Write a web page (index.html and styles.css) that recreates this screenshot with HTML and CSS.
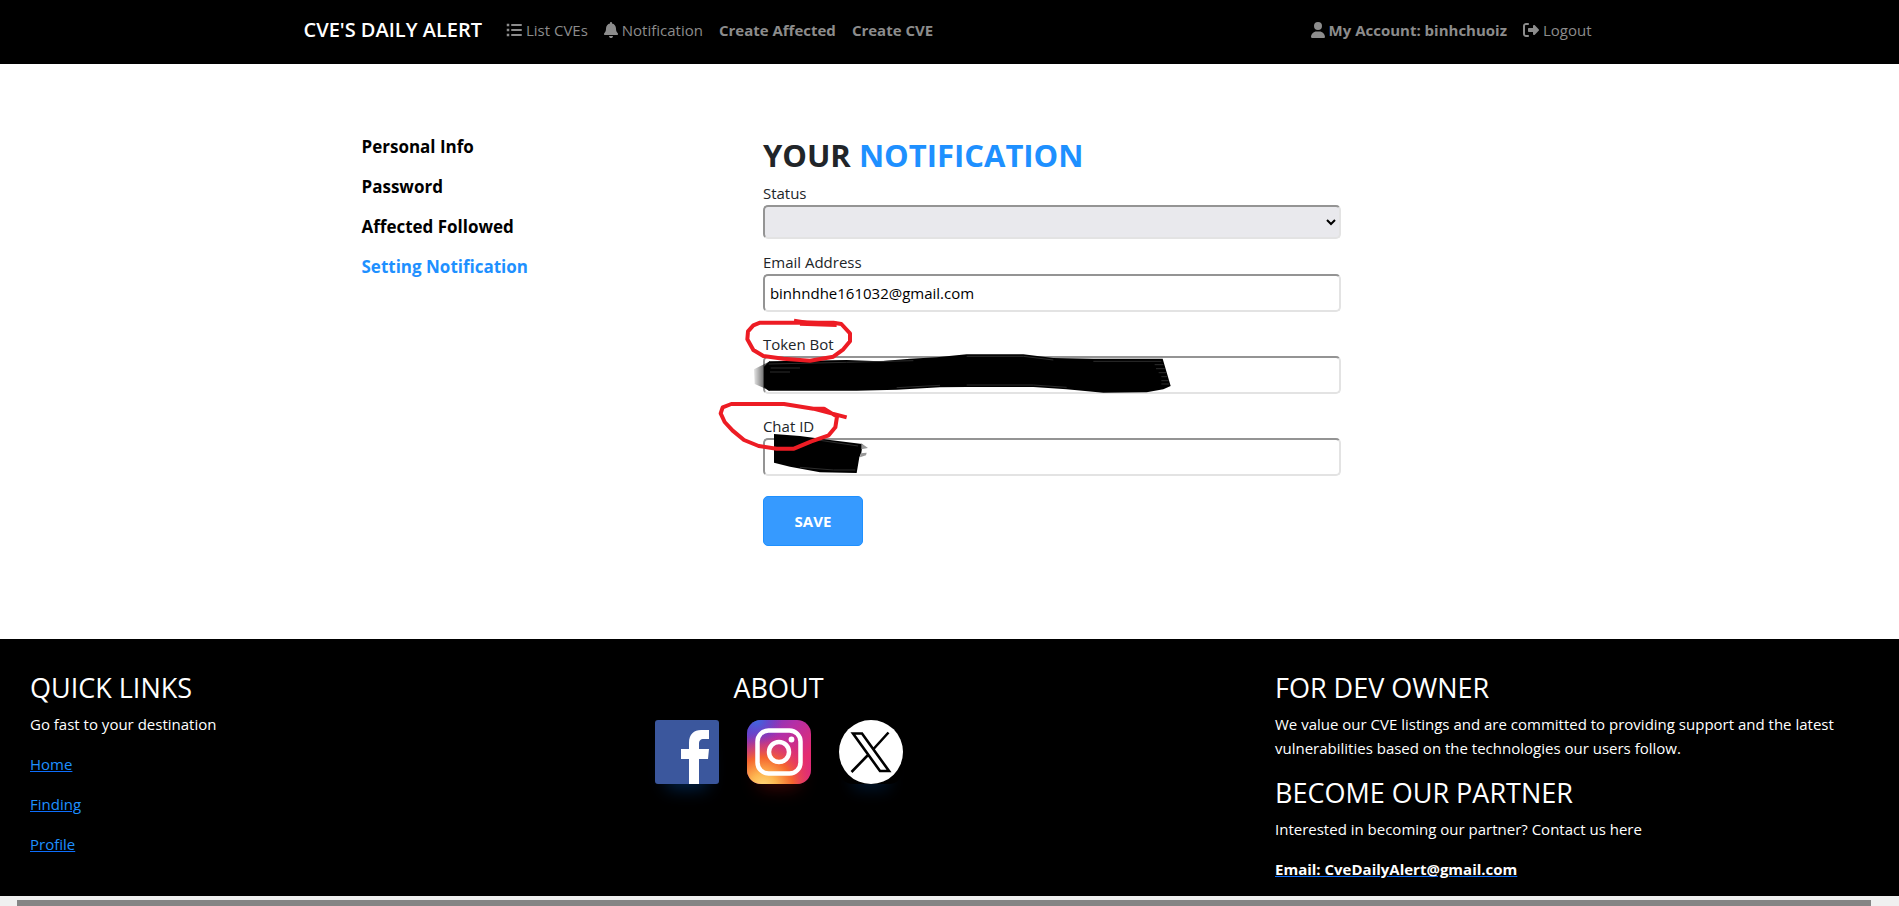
FILE: index.html
```html
<!DOCTYPE html>
<html lang="en">
<head>
<meta charset="utf-8">
<title>CVE'S DAILY ALERT</title>
<link rel="stylesheet" href="styles.css">
</head>
<body>
<header class="topbar">
  <nav class="container topbar-inner">
    <a class="brand" href="#">CVE'S DAILY ALERT</a>
    <a class="nav-link" href="#"><svg class="icon" viewBox="0 0 512 512" aria-hidden="true"><path d="M24 56h80v80H24zM24 216h80v80H24zM24 376h80v80H24zM192 64h288a32 32 0 0 1 0 64H192a32 32 0 0 1 0-64zM192 224h288a32 32 0 0 1 0 64H192a32 32 0 0 1 0-64zM192 384h288a32 32 0 0 1 0 64H192a32 32 0 0 1 0-64z"/></svg> List CVEs</a>
    <a class="nav-link" href="#"><svg class="icon icon-narrow" viewBox="0 0 448 512" aria-hidden="true"><path d="M224 0c-17.700 0-32 14.300-32 32v19.200C119 66 64 130.600 64 208v18.800c0 47-17.300 92.400-48.500 127.600l-7.400 8.300c-8.400 9.400-10.400 22.900-5.300 34.400S19.400 416 32 416h384c12.600 0 24-7.400 29.200-18.900s3.100-25-5.300-34.400l-7.400-8.300C401.300 319.200 384 273.900 384 226.800V208c0-77.400-55-142-128-156.800V32c0-17.700-14.300-32-32-32zm45.300 493.300c12-12 18.700-28.300 18.700-45.300H160c0 17 6.700 33.300 18.700 45.300S207 512 224 512s33.300-6.700 45.300-18.700z"/></svg> Notification</a>
    <a class="nav-link strong" href="#">Create Affected</a>
    <a class="nav-link strong" href="#">Create CVE</a>
    <a class="nav-link strong push" href="#"><svg class="icon icon-narrow" viewBox="0 0 448 512" aria-hidden="true"><path d="M224 256a128 128 0 1 0 0-256 128 128 0 1 0 0 256zm-45.700 48C79.800 304 0 383.800 0 482.300 0 498.700 13.300 512 29.700 512h388.600c16.400 0 29.700-13.300 29.700-29.700C448 383.800 368.200 304 269.700 304h-91.400z"/></svg> My Account: binhchuoiz</a>
    <a class="nav-link" href="#"><svg class="icon" viewBox="0 0 512 512" aria-hidden="true"><path d="M377.900 105.900l122.800 122.800c7.200 7.200 11.300 17.100 11.300 27.300s-4.100 20.100-11.300 27.300L377.900 406.100c-6.400 6.400-15 9.900-24 9.900-18.700 0-33.900-15.200-33.900-33.900V320H192c-17.700 0-32-14.300-32-32v-64c0-17.700 14.300-32 32-32h128v-62.100c0-18.700 15.200-33.900 33.900-33.900 9 0 17.600 3.600 24 9.900zM160 96H96c-17.700 0-32 14.300-32 32v256c0 17.700 14.300 32 32 32h64c17.700 0 32 14.300 32 32s-14.300 32-32 32H96c-53 0-96-43-96-96V128c0-53 43-96 96-96h64c17.700 0 32 14.300 32 32s-14.300 32-32 32z"/></svg> Logout</a>
  </nav>
</header>

<main class="container account">
  <nav class="side-menu" aria-label="Account">
    <a href="#">Personal Info</a>
    <a href="#">Password</a>
    <a href="#">Affected Followed</a>
    <a class="active" href="#">Setting Notification</a>
  </nav>
  <form class="settings">
    <h1>YOUR <span>NOTIFICATION</span></h1>
    <div class="field field-status">
      <label for="status">Status</label>
      <select id="status"><option></option></select>
    </div>
    <div class="field">
      <label for="email">Email Address</label>
      <input id="email" type="text" value="binhndhe161032@gmail.com">
    </div>
    <div class="marked">
      <div class="field">
        <label for="token">Token Bot</label>
        <input id="token" type="text">
      </div>
      <div class="field">
        <label for="chat">Chat ID</label>
        <input id="chat" type="text">
      </div>
      <svg class="scribbles" viewBox="0 0 1500 780" aria-hidden="true">
        <defs>
          <linearGradient id="fade"><stop offset="0" stop-color="#000" stop-opacity=".1"/><stop offset="1" stop-color="#000" stop-opacity=".85"/></linearGradient>
        </defs>
        <path fill="url(#fade)" d="M162 208L210 184V272L164 252Z"/>
        <path d="M192 200L208 184L440 180L540 184L630 176L710 172L800 163H970L1060 174L1180 176H1388L1412 258L1390 268L1340 277L1210 278L1100 268L1000 261H800L720 262L590 269L470 272H206L192 262Z"/>
        <path d="M222 402L300 408L390 420L480 431L488 432L484 458L478 472L470 519L360 517L270 500L222 488Z"/>
        <path fill="#999" d="M484 430L504 444L484 448ZM482 460L500 458L498 466L480 472Z"/>
        <g class="streaks">
          <path d="M206 192L440 187L640 182M800 169H970L1060 180M1180 184H1384M1364 194H1390M1368 206H1394M1376 218H1398M1384 230H1402M1384 242H1406M1384 252H1408M800 255H1000L1100 262M720 256L590 263M212 204H300M210 216H270M300 502L400 510H466M340 418L474 438"/>
        </g>
        <g class="pen">
          <path d="M282 62L320 68H400L424 72L450 100V124L430 148L400 170L330 182L250 176L190 168L160 150L142 118L144 94L160 76L180 68H300"/>
          <path stroke-width="16" d="M300 69L410 73"/>
          <path d="M440 352L340 326L252 312H94L68 322L62 340L74 366L98 392L132 420L176 438L230 446H282L334 424L386 406L406 382L411 350L372 326H340"/>
        </g>
      </svg>
    </div>
    <button class="save" type="button">SAVE</button>
  </form>
</main>

<footer class="footer">
  <section class="links">
    <h2>QUICK LINKS</h2>
    <p>Go fast to your destination</p>
    <p><a href="#">Home</a></p>
    <p><a href="#">Finding</a></p>
    <p><a href="#">Profile</a></p>
  </section>
  <section class="about">
    <h2>ABOUT</h2>
    <div class="social">
      <a class="glow-blue" href="#" aria-label="Facebook"><svg viewBox="0 0 64 64"><rect width="64" height="64" rx="3" fill="#3b579d"/><path fill="#fff" d="M34 64V39h-8v-10h8v-6c0-9 5-13 12-13h8v9h-5c-4 0-5 2-5 5v5h10l-1 10h-9v25z"/></svg></a>
      <a class="glow-red" href="#" aria-label="Instagram"><svg viewBox="0 0 64 64"><defs>
        <linearGradient id="ig" x1="0" y1="0" x2="1" y2="1"><stop offset="0" stop-color="#5a3fd0"/><stop offset=".4" stop-color="#b52fa6"/><stop offset=".75" stop-color="#e52b6e"/><stop offset="1" stop-color="#d62a87"/></linearGradient>
        <radialGradient id="ig-warm" cx=".25" cy="1.05" r=".85"><stop offset="0" stop-color="#ffdc7d"/><stop offset=".25" stop-color="#fdb650"/><stop offset=".55" stop-color="#f5652f"/><stop offset="1" stop-color="#e52b6e" stop-opacity="0"/></radialGradient>
        <radialGradient id="ig-cool" cx=".15" cy="0" r=".4"><stop offset="0" stop-color="#3f6be0"/><stop offset="1" stop-color="#5a3fd0" stop-opacity="0"/></radialGradient></defs>
        <rect width="64" height="64" rx="14" fill="url(#ig)"/><rect width="64" height="64" rx="14" fill="url(#ig-warm)"/><rect width="64" height="64" rx="14" fill="url(#ig-cool)"/>
        <g fill="none" stroke="#fff" stroke-width="4.500"><rect x="10.500" y="10.500" width="43" height="43" rx="11"/><circle cx="32" cy="32" r="10"/></g><circle cx="44.500" cy="19.500" r="2.900" fill="#fff"/></svg></a>
      <a class="glow-dim" href="#" aria-label="X"><svg viewBox="0 0 64 64"><circle cx="32" cy="32" r="32" fill="#fff"/><g fill="none" stroke="#000" stroke-width="2.600"><path d="M14 13.500h9L50 51h-9zM49.500 12.500L34.500 29M29 35L12.500 52"/></g></svg></a>
    </div>
  </section>
  <section class="contact">
    <h2>FOR DEV OWNER</h2>
    <p>We value our CVE listings and are committed to providing support and the latest vulnerabilities based on the technologies our users follow.</p>
    <h2>BECOME OUR PARTNER</h2>
    <p>Interested in becoming our partner? Contact us here</p>
    <p><a class="mail" href="#">Email: CveDailyAlert@gmail.com</a></p>
  </section>
</footer>
<div class="scroll-track"><div class="scroll-thumb"></div></div>
</body>
</html>
```

FILE: styles.css
```css
* { box-sizing: border-box; }
body {
  margin: 0;
  background: #fff;
  color: #212529;
  font: 15px/24px "Open Sans", "Noto Sans", sans-serif;
}
h1, h2, p { margin: 0; }
a { text-decoration: none; }
.container { max-width: 1320px; margin: 0 auto; }

.topbar { background: #000; }
.topbar-inner {
  display: flex;
  align-items: center;
  min-height: 64px;
  padding: 0 10px 4px 14px;
}
.brand { margin-right: 16px; color: #fff; font-size: 20px; font-weight: 600; }
.nav-link { padding: 0 8px; color: #8c8c8c; white-space: nowrap; }
.strong { font-weight: 700; }
.push { margin-left: auto; }
.icon { width: 16px; height: 16px; fill: currentColor; vertical-align: -2px; }
.icon-narrow { width: 14px; }

.account {
  display: grid;
  grid-template-columns: 401fr 577fr;
  padding: 71px 269px 93px 72px;
}
.side-menu {
  display: flex;
  flex-direction: column;
  gap: 16px;
  font-size: 17px;
  font-weight: 700;
}
.side-menu a { color: #000; }
.side-menu .active { color: #1e90ff; }
h1 { margin: 2px 0 8px; font-size: 31px; line-height: 36px; font-weight: 700; }
h1 span { color: #1e90ff; }
.field { display: flex; flex-direction: column; margin-bottom: 20px; }
.field-status { margin-bottom: 11px; }
.field label { line-height: 24px; }
.field input, .field select {
  width: 100%;
  height: 38px;
  padding: 0 5px;
  border: 2px solid;
  border-color: #949494 #e3e3e3 #e3e3e3 #949494;
  border-radius: 5px;
  background: #fff;
  color: #000;
  font: inherit;
}
.field select { height: 34px; padding: 0; background: #e9e9ed; }
.marked { position: relative; }
.scribbles {
  position: absolute;
  left: -63px;
  top: -32px;
  width: 500px;
  height: 260px;
  pointer-events: none;
}
.streaks { fill: none; stroke: #2c2c2c; stroke-width: 3; }
.pen { fill: none; stroke: #ed1c24; stroke-width: 12; stroke-linejoin: round; }
.save {
  min-width: 100px;
  height: 50px;
  border: 1px solid #1e90ff;
  border-radius: 5px;
  background: #369aff;
  color: #fff;
  font: inherit;
  font-weight: 700;
}

.footer {
  display: flex;
  justify-content: space-between;
  padding: 32px 30px 15px;
  background: #000;
  color: #fff;
}
.footer h2 { margin-bottom: 8px; font-size: 27px; line-height: 33px; font-weight: 400; }
.footer p { margin-bottom: 16px; }
.footer p:last-child { margin-bottom: 0; }
.footer a { color: #1e90ff; text-decoration: underline; text-decoration-color: #0d6efd; }
.footer .mail { color: #fff; font-weight: 700; }
.links { flex: 0 0 252px; }
.contact { flex: 0 0 594px; }
.about h2 { text-align: center; }
.social { display: flex; gap: 28px; padding-top: 8px; }
.social a { border-radius: 14px; }
.social svg { display: block; width: 64px; height: 64px; }
.glow-blue { box-shadow: 0 16px 18px -12px #002650; }
.glow-red { box-shadow: 0 16px 18px -12px #400606; }
.glow-dim { box-shadow: 0 20px 16px -14px #00142a; }

.scroll-track { height: 10px; padding: 4px 28px 0 17px; background: #f0f0f0; }
.scroll-thumb { height: 6px; background: #858585; }
```
